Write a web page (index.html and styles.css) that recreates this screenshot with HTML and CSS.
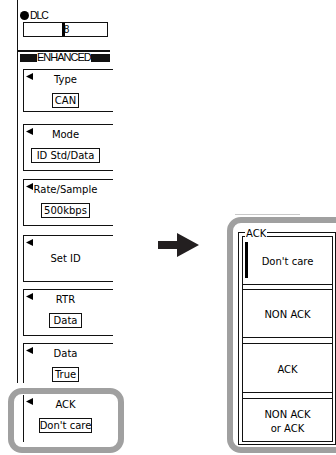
FILE: index.html
```html
<!DOCTYPE html>
<html>
<head>
<meta charset="utf-8">
<title>ACK</title>
<link rel="stylesheet" href="styles.css">
</head>
<body>
<div class="page">
  <div class="left">
    <div class="menu">
      <div class="dlc-head"><span class="dot"></span><span class="dlc-label">DLC</span></div>
      <div class="dlc-input"><span class="cursor"></span><span class="digit">8</span></div>
      <div class="rule"></div>
      <div class="enh"><span class="bar bar-l"></span><span class="enh-text">ENHANCED</span><span class="bar bar-r"></span></div>
      <div class="items">
        <div class="item item-type">
          <svg class="tri" viewBox="0 0 7 7"><polygon points="0,3.5 7,0 7,7"/></svg>
          <div class="label">Type</div>
          <div class="value">CAN</div>
        </div>
        <div class="item item-mode">
          <svg class="tri" viewBox="0 0 7 7"><polygon points="0,3.5 7,0 7,7"/></svg>
          <div class="label">Mode</div>
          <div class="value value-wide">ID Std/Data</div>
        </div>
        <div class="item item-rate">
          <svg class="tri" viewBox="0 0 7 7"><polygon points="0,3.5 7,0 7,7"/></svg>
          <div class="label">Rate/Sample</div>
          <div class="value">500kbps</div>
        </div>
        <div class="item item-set">
          <svg class="tri" viewBox="0 0 7 7"><polygon points="0,3.5 7,0 7,7"/></svg>
          <div class="label">Set ID</div>
        </div>
        <div class="item">
          <svg class="tri" viewBox="0 0 7 7"><polygon points="0,3.5 7,0 7,7"/></svg>
          <div class="label">RTR</div>
          <div class="value value-mid">Data</div>
        </div>
        <div class="item">
          <svg class="tri" viewBox="0 0 7 7"><polygon points="0,3.5 7,0 7,7"/></svg>
          <div class="label">Data</div>
          <div class="value">True</div>
        </div>
      </div>
    </div>
    <div class="item item-ack">
      <svg class="tri" viewBox="0 0 7 7"><polygon points="0,3.5 7,0 7,7"/></svg>
      <div class="label">ACK</div>
      <div class="value value-tight">Don't care</div>
    </div>
    <div class="callout-l"></div>
  </div>

  <div class="arrow">
    <svg viewBox="0 0 41 24" width="41" height="24"><polygon points="0,8 19,8 19,0 41,12 19,24 19,16 0,16"/></svg>
  </div>

  <div class="right">
    <div class="fade"></div>
    <div class="callout-r">
      <div class="frame">
        <span class="legend">ACK</span>
        <div class="inner">
          <div class="opt opt-1"><span class="selbar"></span>Don't care</div>
          <div class="opt opt-2">NON ACK</div>
          <div class="opt opt-3">ACK</div>
          <div class="opt opt-4">NON ACK<br>or ACK</div>
        </div>
      </div>
    </div>
  </div>
</div>
</body>
</html>
```

FILE: styles.css
```css
html, body {
  margin: 0;
  padding: 0;
  background: #fff;
}
body {
  width: 336px;
  height: 455px;
  overflow: hidden;
  font-family: "DejaVu Sans", sans-serif;
  color: #000;
}
.page {
  display: flex;
  align-items: flex-start;
  width: 336px;
  height: 455px;
}

/* ---------- left soft-key column ---------- */
.left {
  flex: none;
  position: relative;
  width: 113px;
  height: 455px;
}
.menu {
  margin-left: 17px;
  width: 96px;
  height: 383px;
  box-sizing: border-box;
  border-left: 1px solid #111;
  overflow: hidden;
}
.dlc-head {
  display: flex;
  align-items: center;
  height: 10px;
  margin: 10px 0 0 2px;
}
.dot {
  width: 9px;
  height: 9px;
  border-radius: 50%;
  background: #000;
  margin-right: 1px;
}
.dlc-label {
  font-family: "Liberation Sans", sans-serif;
  font-size: 10.5px;
  line-height: 10px;
  letter-spacing: -1.1px;
}
.dlc-input {
  display: flex;
  justify-content: center;
  align-items: center;
  width: 85px;
  height: 15px;
  box-sizing: border-box;
  margin: 2px 0 0 5px;
  border: 1px solid #111;
  font-family: "Liberation Sans", sans-serif;
  font-size: 10px;
}
.cursor {
  width: 3px;
  height: 13px;
  background: #000;
  margin-right: -1px;
}
.digit {
  line-height: 13px;
}
.rule {
  width: 93px;
  height: 2px;
  margin: 13px 0 0 -1px;
  background: #111;
}
.enh {
  display: flex;
  align-items: center;
  height: 9px;
  margin: 1px 0 0 2px;
}
.bar {
  height: 8px;
  background: #111;
}
.bar-l { width: 17px; }
.bar-r { width: 19px; }
.enh-text {
  font-family: "Liberation Sans", sans-serif;
  font-size: 11px;
  line-height: 9px;
  letter-spacing: -1px;
  white-space: nowrap;
}
.items {
  display: flex;
  flex-direction: column;
  gap: 7px;
  margin: 7px 0 0 5px;
}
.item {
  flex: none;
  position: relative;
  width: 90px;
  height: 47px;
  box-sizing: border-box;
  border: 1px solid #111;
  border-right: none;
  padding: 4px 6px 0 0;
  text-align: center;
}
.item-type { height: 43px; margin-bottom: 5px; }
.item-mode { margin-bottom: 1px; }
.item-rate { margin-bottom: 2px; }
.item-set { padding-top: 17px; }
.item-ack {
  margin: 12px 0 0 23px;
  border-top: none;
  border-bottom: none;
}
.tri {
  position: absolute;
  left: 2px;
  top: 3px;
  width: 7px;
  height: 7px;
  fill: #000;
}
.label {
  font-size: 10px;
  line-height: 12px;
  white-space: nowrap;
}
.value {
  display: block;
  width: max-content;
  margin: 7px auto 0;
  border: 1px solid #111;
  padding: 0 2px;
  font-size: 10px;
  line-height: 13px;
  white-space: nowrap;
}
.value-wide { padding: 0 5px; }
.value-mid { padding: 0 4px; }
.value-tight { padding: 0; }
.callout-l {
  position: absolute;
  left: 8px;
  top: 388px;
  width: 116px;
  height: 65px;
  box-sizing: border-box;
  border: 6px solid #a0a0a0;
  border-radius: 14px;
}

/* ---------- arrow ---------- */
.arrow {
  flex: none;
  width: 41px;
  height: 24px;
  margin: 233px 0 0 45px;
}
.arrow svg {
  display: block;
  fill: #231f20;
}

/* ---------- right: ACK selection menu ---------- */
.right {
  flex: none;
  width: 125px;
  margin: 214px 0 0 28px;
}
.fade {
  width: 65px;
  height: 1px;
  margin: 0 0 2px 8px;
  background: #c9c9c9;
}
.callout-r {
  width: 125px;
  height: 236px;
  box-sizing: border-box;
  border: 6px solid #a0a0a0;
  border-radius: 14px;
  padding: 9px 0 0 5px;
}
.frame {
  position: relative;
  width: 98px;
  box-sizing: border-box;
  border: 1px solid #111;
  padding: 3px 2px 2px 3px;
}
.legend {
  position: absolute;
  left: 6px;
  top: -4px;
  padding: 0 1px;
  background: #fff;
  font-size: 10px;
  line-height: 10px;
}
.inner {
  display: flex;
  flex-direction: column;
  border: 1px solid #111;
}
.opt {
  position: relative;
  display: flex;
  align-items: center;
  justify-content: center;
  box-sizing: border-box;
  padding-top: 3px;
  border-top: 1px solid #111;
  border-bottom: 1px solid #111;
  text-align: center;
  font-size: 10px;
  line-height: 14px;
}
.opt-1 { height: 48px; border-top: none; }
.opt-2 { height: 49px; margin-top: 4px; }
.opt-3 { height: 50px; margin-top: 5px; }
.opt-4 { height: 43px; margin-top: 5px; border-bottom: none; }
.selbar {
  position: absolute;
  left: 2px;
  top: 5px;
  width: 3px;
  height: 36px;
  background: #000;
}
```
